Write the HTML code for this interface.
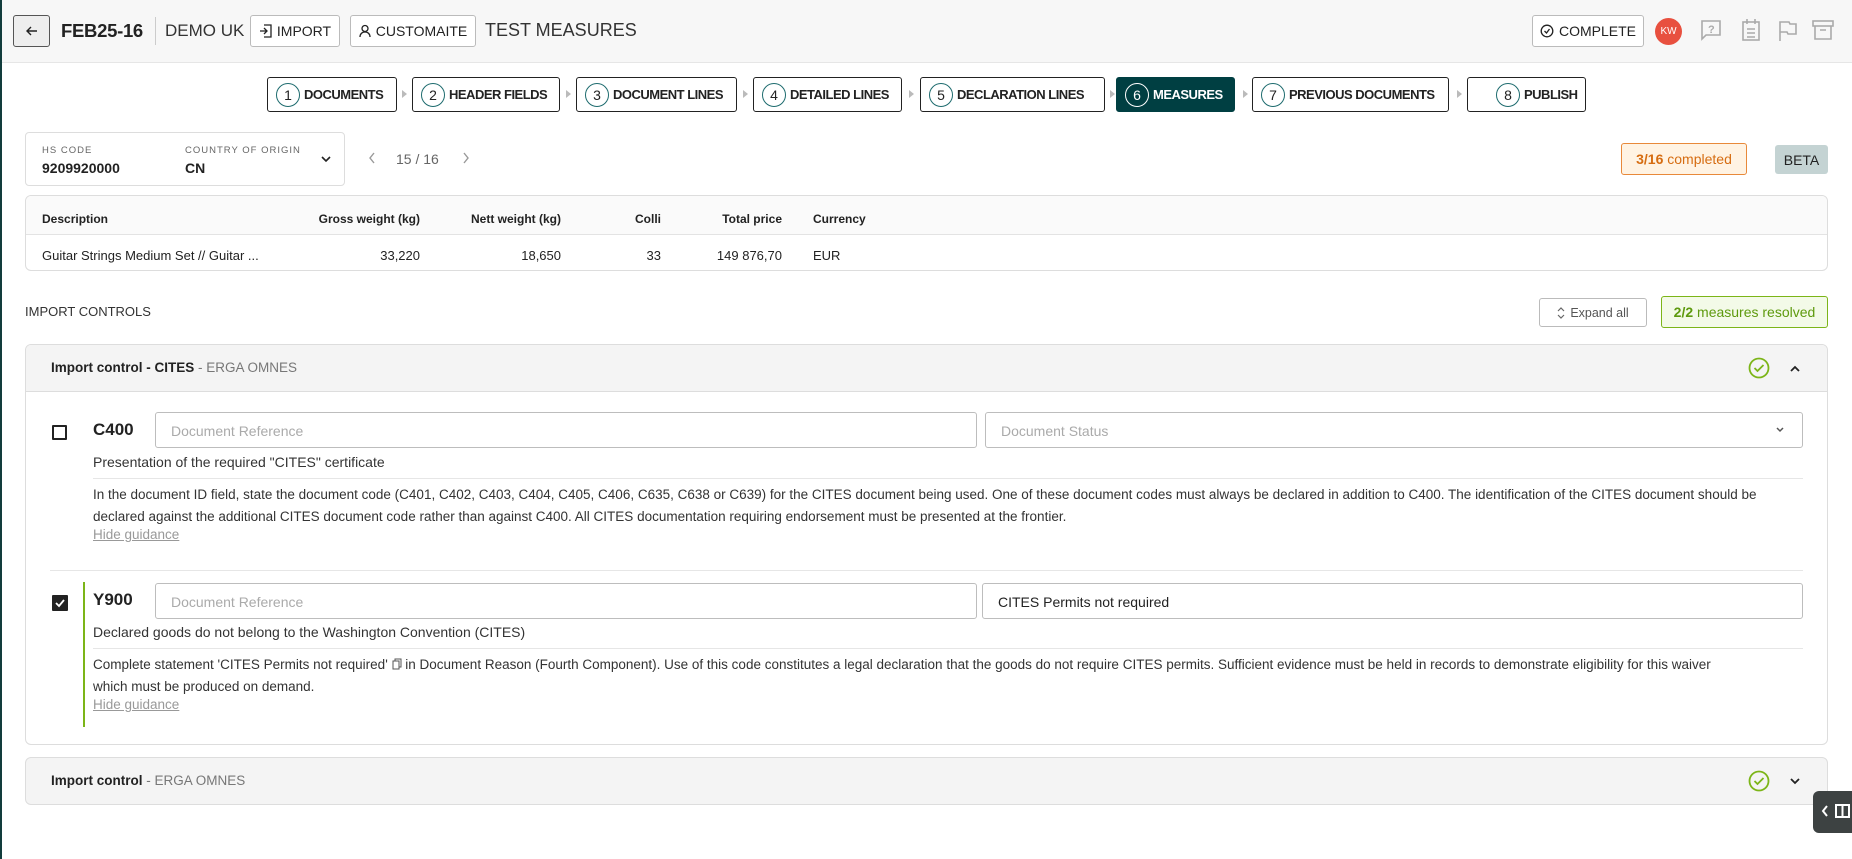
<!DOCTYPE html>
<html><head><meta charset="utf-8"><style>
*{box-sizing:border-box;margin:0;padding:0}
body{width:1852px;height:859px;overflow:hidden;background:#fff;font-family:"Liberation Sans",Arial,sans-serif;color:#222;position:relative}
.a{position:absolute}
.hdr{left:0;top:0;width:1852px;height:63px;background:#f7f7f7;border-bottom:1px solid #e6e6e6}
.strip{left:0;top:0;width:2px;height:859px;background:#123c3c}
.btn{position:absolute;border:1px solid #bbb;border-radius:3px;background:#fff;display:flex;align-items:center;justify-content:center;font-size:14px;color:#222;gap:5px;white-space:nowrap}
.step{position:absolute;top:77px;height:35px;border:1px solid #222;border-radius:3px;background:#fff;display:flex;align-items:center;padding-left:8px;font-size:13px;font-weight:bold;color:#222;letter-spacing:-0.5px;white-space:nowrap;overflow:hidden}
.step .n{flex:none;width:24px;height:24px;border:1.5px solid #1d6b6e;border-radius:50%;display:flex;align-items:center;justify-content:center;font-weight:normal;font-size:14px;margin-right:4px;letter-spacing:0}
.step.act{background:#003f42;border-color:#003f42;color:#fff}
.step.act .n{border-color:#fff}
.tri{position:absolute;top:90px;width:0;height:0;border-top:4px solid transparent;border-bottom:4px solid transparent;border-left:5px solid #bbb}
.card{position:absolute;border:1px solid #ddd;border-radius:6px;background:#fff;overflow:hidden}
.th{font-size:12px;font-weight:bold;position:absolute;top:16px}
.td{font-size:13px;position:absolute;top:52px}
.r{text-align:right}
.inp{position:absolute;height:36px;border:1px solid #bdbdbd;border-radius:3px;font-size:14px;color:#aaa;padding:10px 15px}
.txt{position:absolute;font-size:13.5px;color:#333;white-space:nowrap}
.hide{position:absolute;font-size:13.5px;color:#999;text-decoration:underline}
.sep{position:absolute;height:1px;background:#e6e6e6}
</style></head><body>
<div class="a hdr"></div>
<div class="a strip"></div>
<div class="btn" style="left:13px;top:15px;width:37px;height:32px;background:#eee;border-color:#555">
<svg width="14" height="14" viewBox="0 0 14 14"><path d="M12 7H2M6 3L2 7l4 4" stroke="#222" stroke-width="1.4" fill="none"/></svg></div>
<div class="a" style="left:61px;top:20px;font-size:18.5px;font-weight:bold;letter-spacing:-0.3px">FEB25-16</div>
<div class="a" style="left:155px;top:17px;width:1px;height:28px;background:#ccc"></div>
<div class="a" style="left:165px;top:21px;font-size:17px;color:#333">DEMO UK</div>
<div class="btn" style="left:250px;top:15px;width:90px;height:32px"><svg width="13" height="14" viewBox="0 0 13 14"><path d="M5 1h7v12H5M1 7h7M5 4l3 3-3 3" stroke="#222" stroke-width="1.3" fill="none"/></svg>IMPORT</div>
<div class="btn" style="left:350px;top:15px;width:126px;height:32px"><svg width="12" height="14" viewBox="0 0 12 14"><circle cx="6" cy="4.5" r="3" stroke="#222" stroke-width="1.3" fill="none"/><path d="M1 13c0-3 2-5 5-5s5 2 5 5" stroke="#222" stroke-width="1.3" fill="none"/></svg>CUSTOMAITE</div>
<div class="a" style="left:485px;top:20px;font-size:18px;color:#333">TEST MEASURES</div>
<div class="btn" style="left:1532px;top:15px;width:112px;height:32px"><svg width="14" height="14" viewBox="0 0 14 14"><circle cx="7" cy="7" r="5.8" stroke="#222" stroke-width="1.3" fill="none"/><path d="M4.5 7l2 2 3-4" stroke="#222" stroke-width="1.3" fill="none"/></svg>COMPLETE</div>
<div class="a" style="left:1655px;top:18px;width:27px;height:27px;border-radius:50%;background:#e8503f;color:#fff;font-size:10px;display:flex;align-items:center;justify-content:center">KW</div>
<svg class="a" style="left:1700px;top:19px" width="22" height="22" viewBox="0 0 22 22" fill="none" stroke="#aaa" stroke-width="1.6"><path d="M2 2h18v14H6l-4 4z"/><text x="8" y="14" font-size="11" font-weight="bold" fill="#aaa" stroke="none" font-family="Liberation Sans">?</text></svg>
<svg class="a" style="left:1741px;top:18px" width="20" height="24" viewBox="0 0 20 24" fill="none" stroke="#aaa" stroke-width="1.6"><rect x="2" y="4" width="16" height="18"/><path d="M6 1v5M14 1v5M6 11h8M6 15h8M6 19h8"/></svg>
<svg class="a" style="left:1778px;top:20px" width="20" height="22" viewBox="0 0 20 22" fill="none" stroke="#aaa" stroke-width="1.6"><path d="M2 21V2h9l1 2h6v10h-8l-1-2H2"/></svg>
<svg class="a" style="left:1812px;top:20px" width="22" height="20" viewBox="0 0 22 20" fill="none" stroke="#aaa" stroke-width="1.6"><rect x="1" y="1" width="20" height="5"/><path d="M3 6v13h16V6M8 10h6"/></svg>
<div class="step" style="left:267px;width:130px"><span class="n">1</span>DOCUMENTS</div>
<div class="tri" style="left:402px"></div>
<div class="step" style="left:412px;width:148px"><span class="n">2</span>HEADER FIELDS</div>
<div class="tri" style="left:566px"></div>
<div class="step" style="left:576px;width:161px"><span class="n">3</span>DOCUMENT LINES</div>
<div class="tri" style="left:743px"></div>
<div class="step" style="left:753px;width:149px"><span class="n">4</span>DETAILED LINES</div>
<div class="tri" style="left:909px"></div>
<div class="step" style="left:920px;width:185px"><span class="n">5</span>DECLARATION LINES</div>
<div class="tri" style="left:1110px"></div>
<div class="step act" style="left:1116px;width:119px"><span class="n">6</span>MEASURES</div>
<div class="tri" style="left:1243px"></div>
<div class="step" style="left:1252px;width:197px"><span class="n">7</span>PREVIOUS DOCUMENTS</div>
<div class="tri" style="left:1457px"></div>
<div class="step" style="left:1467px;width:119px;padding-left:28px"><span class="n">8</span>PUBLISH</div>
<div class="card" style="left:25px;top:132px;width:320px;height:54px;border-radius:4px">
<div class="a" style="left:16px;top:12px;font-size:9.5px;color:#666;letter-spacing:1px">HS CODE</div>
<div class="a" style="left:16px;top:27px;font-size:14px;font-weight:bold">9209920000</div>
<div class="a" style="left:159px;top:12px;font-size:9.5px;color:#666;letter-spacing:1px">COUNTRY OF ORIGIN</div>
<div class="a" style="left:159px;top:27px;font-size:14px;font-weight:bold">CN</div>
<svg class="a" style="left:295px;top:22px" width="10" height="8" viewBox="0 0 10 8"><path d="M1 2l4 4 4-4" stroke="#222" stroke-width="1.6" fill="none"/></svg>
</div>
<svg class="a" style="left:368px;top:152px" width="8" height="12" viewBox="0 0 8 12"><path d="M6 1L2 6l4 5" stroke="#999" stroke-width="1.4" fill="none"/></svg>
<div class="a" style="left:396px;top:151px;font-size:14px;color:#666">15 / 16</div>
<svg class="a" style="left:462px;top:152px" width="8" height="12" viewBox="0 0 8 12"><path d="M2 1l4 5-4 5" stroke="#999" stroke-width="1.4" fill="none"/></svg>
<div class="a" style="left:1621px;top:143px;width:126px;height:32px;background:#fff3e3;border:1px solid #e8893a;border-radius:3px;font-size:14px;color:#d66d12;display:flex;align-items:center;justify-content:center"><b>3/16</b>&nbsp;completed</div>
<div class="a" style="left:1775px;top:145px;width:53px;height:29px;background:#c4d3d3;border-radius:3px;font-size:14px;display:flex;align-items:center;justify-content:center">BETA</div>
<div class="card" style="left:25px;top:195px;width:1803px;height:76px">
<div class="a" style="left:0;top:0;width:100%;height:39px;background:#fafafa;border-bottom:1px solid #e3e3e3"></div>
<div class="th" style="left:16px">Description</div>
<div class="th r" style="left:200px;width:194px">Gross weight (kg)</div>
<div class="th r" style="left:400px;width:135px">Nett weight (kg)</div>
<div class="th r" style="left:560px;width:75px">Colli</div>
<div class="th r" style="left:640px;width:116px">Total price</div>
<div class="th" style="left:787px">Currency</div>
<div class="td" style="left:16px">Guitar Strings Medium Set // Guitar ...</div>
<div class="td r" style="left:200px;width:194px">33,220</div>
<div class="td r" style="left:400px;width:135px">18,650</div>
<div class="td r" style="left:560px;width:75px">33</div>
<div class="td r" style="left:640px;width:116px">149 876,70</div>
<div class="td" style="left:787px">EUR</div>
</div>
<div class="a" style="left:25px;top:304px;font-size:13px;color:#333">IMPORT CONTROLS</div>
<div class="btn" style="left:1539px;top:298px;width:108px;height:29px;font-size:12.5px;color:#555"><svg width="8" height="14" viewBox="0 0 8 14"><path d="M1 5l3-3 3 3M1 9l3 3 3-3" stroke="#666" stroke-width="1.2" fill="none"/></svg>Expand all</div>
<div class="a" style="left:1661px;top:296px;width:167px;height:32px;background:#f3fae8;border:1px solid #7cb518;border-radius:3px;font-size:14px;color:#5e9a0e;display:flex;align-items:center;justify-content:center"><b>2/2</b>&nbsp;measures resolved</div>
<div class="card" style="left:25px;top:344px;width:1803px;height:401px">
<div class="a" style="left:0;top:0;width:100%;height:47px;background:#f4f4f4;border-bottom:1px solid #ddd"></div>
<div class="a" style="left:25px;top:15px;font-size:13.5px"><b>Import control - CITES</b> <span style="color:#777">- ERGA OMNES</span></div>
<svg class="a" style="left:1722px;top:12px" width="22" height="22" viewBox="0 0 22 22"><circle cx="11" cy="11" r="9.5" stroke="#7cb518" stroke-width="1.8" fill="none"/><path d="M6.5 11l3 3 6-6" stroke="#7cb518" stroke-width="1.8" fill="none"/></svg>
<svg class="a" style="left:1763px;top:19px" width="12" height="8" viewBox="0 0 12 8"><path d="M2 7l4-4 4 4" stroke="#222" stroke-width="1.8" fill="none"/></svg>
</div>
<div class="a" style="left:52px;top:425px;width:15px;height:15px;border:2px solid #222;border-radius:1px"></div>
<div class="a" style="left:93px;top:420px;font-size:17px;font-weight:bold">C400</div>
<div class="inp" style="left:155px;top:412px;width:822px">Document Reference</div>
<div class="inp" style="left:985px;top:412px;width:818px">Document Status</div>
<svg class="a" style="left:1775px;top:426px" width="10" height="8" viewBox="0 0 10 8"><path d="M2 2l3 3 3-3" stroke="#555" stroke-width="1.5" fill="none"/></svg>
<div class="txt" style="left:93px;top:454px;font-size:14px">Presentation of the required "CITES" certificate</div>
<div class="sep" style="left:93px;top:478px;width:1710px"></div>
<div class="txt" style="left:93px;top:484px;line-height:21.5px">In the document ID field, state the document code (C401, C402, C403, C404, C405, C406, C635, C638 or C639) for the CITES document being used. One of these document codes must always be declared in addition to C400. The identification of the CITES document should be<br>declared against the additional CITES document code rather than against C400. All CITES documentation requiring endorsement must be presented at the frontier.</div>
<div class="hide" style="left:93px;top:527px">Hide guidance</div>
<div class="sep" style="left:50px;top:570px;width:1753px"></div>
<div class="a" style="left:83px;top:582px;width:2px;height:145px;background:#7cb518"></div>
<div class="a" style="left:52px;top:595px;width:16px;height:16px;background:#222;border-radius:1px"><svg width="16" height="16" viewBox="0 0 16 16"><path d="M4 8l3 3 5-6" stroke="#fff" stroke-width="1.8" fill="none"/></svg></div>
<div class="a" style="left:93px;top:590px;font-size:17px;font-weight:bold">Y900</div>
<div class="inp" style="left:155px;top:583px;width:822px">Document Reference</div>
<div class="inp" style="left:982px;top:583px;width:821px;color:#222">CITES Permits not required</div>
<div class="txt" style="left:93px;top:624px;font-size:14px">Declared goods do not belong to the Washington Convention (CITES)</div>
<div class="sep" style="left:93px;top:648px;width:1710px"></div>
<div class="txt" style="left:93px;top:654px;line-height:21.5px">Complete statement 'CITES Permits not required' <svg width="10" height="12" viewBox="0 0 10 12" style="vertical-align:-1px"><rect x="1" y="3" width="6" height="8" stroke="#555" fill="none"/><path d="M3 3V1h6v8H7" stroke="#555" fill="none"/></svg> in Document Reason (Fourth Component). Use of this code constitutes a legal declaration that the goods do not require CITES permits. Sufficient evidence must be held in records to demonstrate eligibility for this waiver<br>which must be produced on demand.</div>
<div class="hide" style="left:93px;top:697px">Hide guidance</div>
<div class="card" style="left:25px;top:757px;width:1803px;height:48px;background:#f4f4f4">
<div class="a" style="left:25px;top:15px;font-size:13.5px"><b>Import control</b> <span style="color:#777">- ERGA OMNES</span></div>
<svg class="a" style="left:1722px;top:12px" width="22" height="22" viewBox="0 0 22 22"><circle cx="11" cy="11" r="9.5" stroke="#7cb518" stroke-width="1.8" fill="none"/><path d="M6.5 11l3 3 6-6" stroke="#7cb518" stroke-width="1.8" fill="none"/></svg>
<svg class="a" style="left:1763px;top:20px" width="12" height="8" viewBox="0 0 12 8"><path d="M2 1l4 4 4-4" stroke="#222" stroke-width="1.8" fill="none"/></svg>
</div>
<div class="a" style="left:1813px;top:791px;width:45px;height:42px;background:#3d4242;border-radius:6px 0 0 6px"></div>
<svg class="a" style="left:1820px;top:803px" width="32" height="16" viewBox="0 0 32 16"><path d="M7 3L3 8l4 5" stroke="#fff" stroke-width="2" fill="none"/><rect x="16" y="2" width="13" height="12" stroke="#fff" stroke-width="2" fill="none"/><path d="M22.5 2v12" stroke="#fff" stroke-width="2"/></svg>
</body></html>
